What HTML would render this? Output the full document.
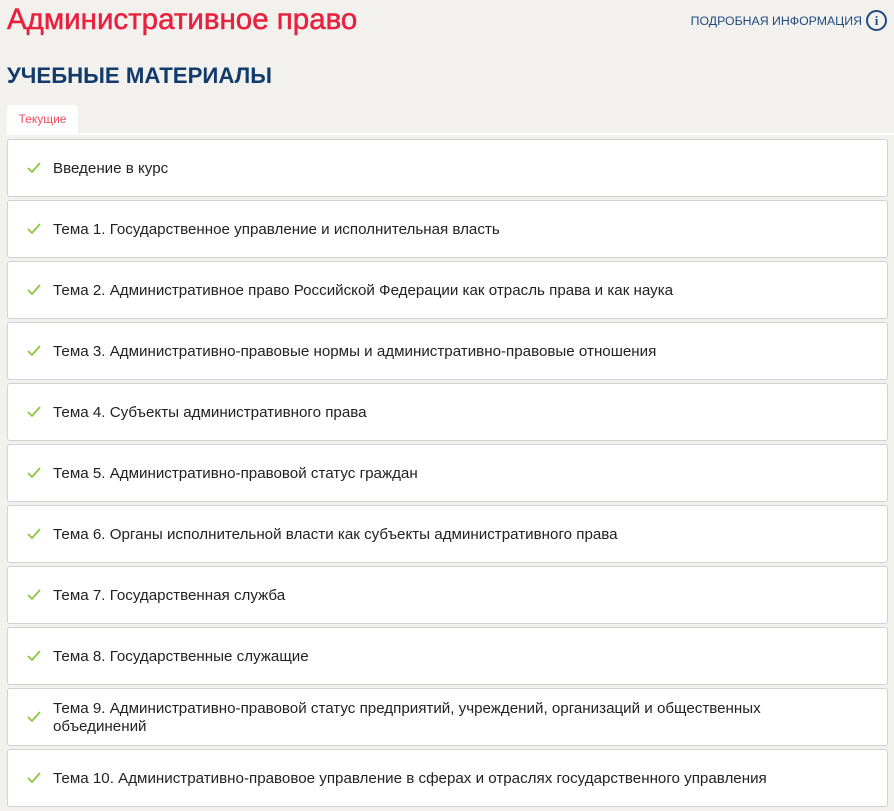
<!DOCTYPE html>
<html><head><meta charset="utf-8"><style>
body{margin:0;background:#f2f1ee;font-family:"Liberation Sans","DejaVu Sans",sans-serif;width:894px;height:811px;overflow:hidden;position:relative}
h1{position:absolute;left:7px;top:3px;margin:0;font-size:29.5px;font-weight:normal;color:#e8213f;-webkit-text-stroke:0.5px #e8213f}
.info{position:absolute;right:32px;top:14px;font-size:12.3px;color:#1f4a7c}
.ic{position:absolute;right:7px;top:10px;width:17px;height:17px;border:2px solid #1f4a7c;border-radius:50%;color:#1f4a7c;font-size:13px;font-weight:bold;text-align:center;line-height:17px;font-family:"Liberation Serif",serif}
h2{position:absolute;left:7px;top:63px;margin:0;font-size:22.2px;color:#123a6b;font-weight:bold}
.tab{position:absolute;left:7px;top:105px;width:71px;height:29px;background:#fff;border-radius:4px 4px 0 0;color:#ef4d5f;font-size:12px;text-align:center;line-height:29px}
.line{position:absolute;left:7px;right:0;top:133px;height:2px;background:#fff}
.it{position:absolute;left:7px;width:879px;height:56px;background:#fff;border:1px solid #d2d2d2;border-radius:3px;box-sizing:content-box}
.it span{position:absolute;left:45px;top:calc(50% + 1px);transform:translateY(-50%);font-size:15.15px;color:#222;line-height:18px;width:740px}
.it svg{position:absolute;left:19px;top:22px}
</style></head><body>
<h1>Административное право</h1>
<div class="info">ПОДРОБНАЯ ИНФОРМАЦИЯ</div><div class="ic">i</div>
<h2>УЧЕБНЫЕ МАТЕРИАЛЫ</h2>
<div class="tab">Текущие</div><div class="line"></div>
<div class="it" style="top:139px"><svg width="14" height="12"><path d="M1 6l4 4 8-9" stroke="#8cc63f" stroke-width="1.8" fill="none"/></svg><span>Введение в курс</span></div>
<div class="it" style="top:200px"><svg width="14" height="12"><path d="M1 6l4 4 8-9" stroke="#8cc63f" stroke-width="1.8" fill="none"/></svg><span>Тема 1. Государственное управление и исполнительная власть</span></div>
<div class="it" style="top:261px"><svg width="14" height="12"><path d="M1 6l4 4 8-9" stroke="#8cc63f" stroke-width="1.8" fill="none"/></svg><span>Тема 2. Административное право Российской Федерации как отрасль права и как наука</span></div>
<div class="it" style="top:322px"><svg width="14" height="12"><path d="M1 6l4 4 8-9" stroke="#8cc63f" stroke-width="1.8" fill="none"/></svg><span>Тема 3. Административно-правовые нормы и административно-правовые отношения</span></div>
<div class="it" style="top:383px"><svg width="14" height="12"><path d="M1 6l4 4 8-9" stroke="#8cc63f" stroke-width="1.8" fill="none"/></svg><span>Тема 4. Субъекты административного права</span></div>
<div class="it" style="top:444px"><svg width="14" height="12"><path d="M1 6l4 4 8-9" stroke="#8cc63f" stroke-width="1.8" fill="none"/></svg><span>Тема 5. Административно-правовой статус граждан</span></div>
<div class="it" style="top:505px"><svg width="14" height="12"><path d="M1 6l4 4 8-9" stroke="#8cc63f" stroke-width="1.8" fill="none"/></svg><span>Тема 6. Органы исполнительной власти как субъекты административного права</span></div>
<div class="it" style="top:566px"><svg width="14" height="12"><path d="M1 6l4 4 8-9" stroke="#8cc63f" stroke-width="1.8" fill="none"/></svg><span>Тема 7. Государственная служба</span></div>
<div class="it" style="top:627px"><svg width="14" height="12"><path d="M1 6l4 4 8-9" stroke="#8cc63f" stroke-width="1.8" fill="none"/></svg><span>Тема 8. Государственные служащие</span></div>
<div class="it" style="top:688px"><svg width="14" height="12"><path d="M1 6l4 4 8-9" stroke="#8cc63f" stroke-width="1.8" fill="none"/></svg><span>Тема 9. Административно-правовой статус предприятий, учреждений, организаций и общественных<br>объединений</span></div>
<div class="it" style="top:749px"><svg width="14" height="12"><path d="M1 6l4 4 8-9" stroke="#8cc63f" stroke-width="1.8" fill="none"/></svg><span>Тема 10. Административно-правовое управление в сферах и отраслях государственного управления</span></div>
</body></html>
